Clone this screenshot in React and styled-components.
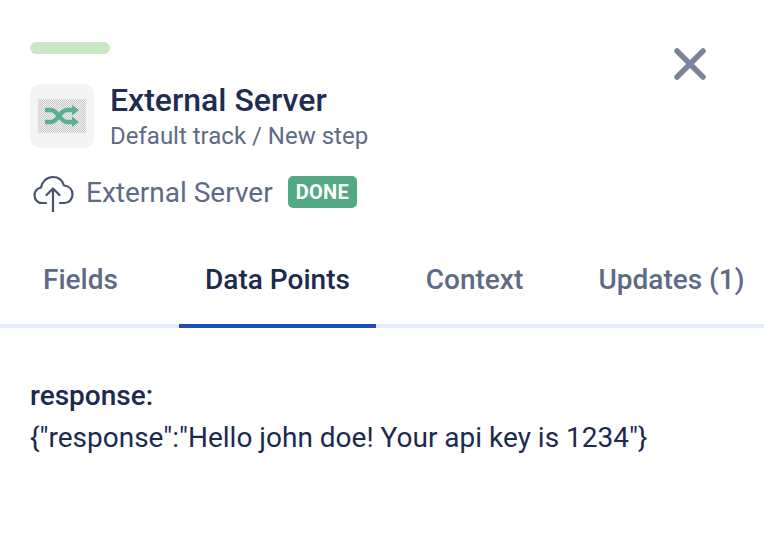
import React from "react";
import styled, { createGlobalStyle } from "styled-components";

const Global = createGlobalStyle`
  html, body { margin: 0; padding: 0; background: #fff; overflow: hidden; }
  body { font-family: Roboto, "Liberation Sans", sans-serif; }
`;
const Page = styled.div`
  width: 764px; height: 558px; overflow: hidden; display: flex; flex-direction: column;
`;
const Header = styled.header`
  position: relative; padding: 42px 30px 0; display: flex; flex-direction: column;
`;
const Pill = styled.div`
  width: 80px; height: 12px; border-radius: 6px; background: #cae7c8;
`;
const TitleRow = styled.div`
  display: flex; gap: 16px; margin-top: 30px; align-items: flex-start;
`;
const Tile = styled.div`
  width: 64px; height: 64px; border-radius: 10px; background: #f3f4f6;
  display: flex; align-items: center; justify-content: center;
`;
const Glyph = styled.div`
  width: 48px; height: 34px; display: flex; align-items: center; justify-content: center;
  background-color: #e4e4e4;
  background-image: repeating-conic-gradient(#c9c9c9 0 25%, #f2f2f2 0 50%);
  background-size: 2px 2px;
`;
const Titles = styled.div`
  display: flex; flex-direction: column;
`;
const Title = styled.h1`
  margin: 0; font-size: 32px; line-height: 32px; font-weight: 500; color: #1f2d52;
`;
const Sub = styled.div`
  font-size: 24px; line-height: 28px; margin-top: 6px; color: #5e6a86;
`;
const StatusRow = styled.div`
  display: flex; align-items: center; margin-top: 18px; height: 48px; padding-left: 3px;
`;
const StatusName = styled.span`
  font-size: 28px; color: #5e6a86; margin-left: 11px;
`;
const Badge = styled.span`
  margin-left: 15px; background: #54a985; color: #fff; font-size: 20px; font-weight: 700;
  line-height: 32px; height: 32px; padding: 0 8px; border-radius: 5px; letter-spacing: 0.3px;
`;
const Close = styled.button`
  position: absolute; top: 46px; right: 56px; width: 36px; height: 36px; padding: 0;
  border: 0; background: none; display: flex;
`;
const Tabs = styled.nav`
  display: grid; grid-template-columns: repeat(4, 197px);
  width: 788px; margin-left: -18px;
`;
const TabRail = styled.div`
  border-bottom: 4px solid #e6ecf9; margin-top: 20px; height: 88px; display: flex;
`;
const Tab = styled.div`
  height: 86px; padding-bottom: 2px; display: flex; align-items: center; justify-content: center;
  font-size: 28px; font-weight: 500; white-space: nowrap;
  color: ${(p) => (p.$active ? "#1c2a4e" : "#5e6a86")};
  border-bottom: 4px solid ${(p) => (p.$active ? "#1e4db7" : "transparent")};
`;
const Body = styled.section`
  padding: 47px 30px 0; font-size: 28px; line-height: 42px; color: #1c2a4e;
`;
const Key = styled.div`
  font-weight: 500;
`;

const Shuffle = () => (
  <svg width="34" height="22" viewBox="0 0 34 22" fill="none">
    <path d="M0 5 H6 C13 5 15 17 22 17 H28" stroke="#5aae93" strokeWidth="4.4" />
    <path d="M0 17 H6 C13 17 15 5 22 5 H28" stroke="#5aae93" strokeWidth="4.4" />
    <path d="M27 0 L34 5 L27 10.5 Z M27 11.5 L34 17 L27 22 Z" fill="#5aae93" />
  </svg>
);
const CloudUp = () => (
  <svg width="42" height="40" viewBox="0 0 42 40" fill="none" stroke="#46526f" strokeWidth="2.2" strokeLinecap="round" strokeLinejoin="round">
    <path d="M13 31 H9 C4.5 31 1.5 27.5 1.5 23 C1.5 19 4.5 16 8 15.5 C9 9.5 14 5 20 5 C25.5 5 29.5 8.5 31 13.5 C36 14 39.5 17.5 39.5 22.5 C39.5 27 36 31 31.5 31 H27" />
    <path d="M20 40 V16.5 M13.5 23 L20 16.5 L26.5 23" />
  </svg>
);
const X = () => (
  <svg width="36" height="36" viewBox="0 0 36 36" stroke="#7a849b" strokeWidth="5.5" strokeLinecap="round">
    <path d="M5 5 L31 31 M31 5 L5 31" />
  </svg>
);

export default function App() {
  return (
    <Page>
      <Global />
      <Header>
        <Pill />
        <TitleRow>
          <Tile><Glyph><Shuffle /></Glyph></Tile>
          <Titles>
            <Title>External Server</Title>
            <Sub>Default track / New step</Sub>
          </Titles>
        </TitleRow>
        <StatusRow>
          <CloudUp />
          <StatusName>External Server</StatusName>
          <Badge>DONE</Badge>
        </StatusRow>
        <Close aria-label="Close"><X /></Close>
      </Header>
      <TabRail>
        <Tabs>
          <Tab>Fields</Tab>
          <Tab $active>Data Points</Tab>
          <Tab>Context</Tab>
          <Tab>Updates (1)</Tab>
        </Tabs>
      </TabRail>
      <Body>
        <Key>response:</Key>
        <div>{'{"response":"Hello john doe! Your api key is 1234"}'}</div>
      </Body>
    </Page>
  );
}
